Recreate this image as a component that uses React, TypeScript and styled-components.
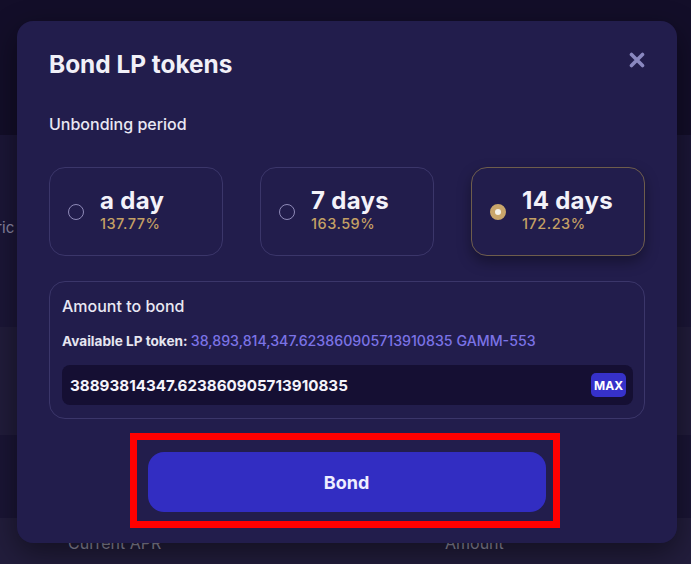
import styled, { createGlobalStyle } from 'styled-components';

const GlobalStyle = createGlobalStyle`
  html, body {
    margin: 0;
    padding: 0;
    background: #130e29;
  }
  body {
    font-family: Inter, "Noto Sans", "Liberation Sans", sans-serif;
    color: #ecebf5;
  }
  * { box-sizing: border-box; }
`;

type Period = { label: string; apr: string; selected?: boolean };

const periods: Period[] = [
  { label: 'a day', apr: '137.77%' },
  { label: '7 days', apr: '163.59%' },
  { label: '14 days', apr: '172.23%', selected: true },
];

const CloseIcon = () => (
  <svg width="16" height="16" viewBox="0 0 16 16" fill="none">
    <path d="M2.5 2.5L13.5 13.5M13.5 2.5L2.5 13.5" stroke="#8a88c0" strokeWidth="3.6" strokeLinecap="round" />
  </svg>
);

const App = () => {
  return (
    <>
      <GlobalStyle />
      <Screen>
        <Page>
          <TopBar />
          <Row $tone="#1b1637" $height={192}>
            <RowLabel>Metric</RowLabel>
          </Row>
          <Row $tone="#211c3b" $height={108} />
          <Row $tone="#1a1535" $height={83} />
          <TableHead>
            <HeadCell $width={377}>Current APR</HeadCell>
            <HeadCell>Amount</HeadCell>
          </TableHead>
        </Page>

        <Modal>
          <TitleRow>
            <Title>Bond LP tokens</Title>
            <CloseButton aria-label="close">
              <CloseIcon />
            </CloseButton>
          </TitleRow>

          <SectionLabel>Unbonding period</SectionLabel>

          <Options>
            {periods.map((p) => (
              <Option key={p.label} $selected={p.selected}>
                <Radio $selected={p.selected} />
                <OptionText>
                  <OptionLabel>{p.label}</OptionLabel>
                  <OptionApr>{p.apr}</OptionApr>
                </OptionText>
              </Option>
            ))}
          </Options>

          <AmountBox>
            <AmountTitle>Amount to bond</AmountTitle>
            <Available>
              Available LP token: <AvailableValue>38,893,814,347.623860905713910835 GAMM-553</AvailableValue>
            </Available>
            <InputRow>
              <AmountValue>38893814347.623860905713910835</AmountValue>
              <MaxButton>MAX</MaxButton>
            </InputRow>
          </AmountBox>

          <Footer>
            <Highlight>
              <BondButton>Bond</BondButton>
            </Highlight>
          </Footer>
        </Modal>
      </Screen>
    </>
  );
};

const Screen = styled.div`
  position: relative;
  width: 691px;
  height: 564px;
  overflow: hidden;
`;

const Page = styled.div`
  display: flex;
  flex-direction: column;
  height: 100%;
`;

const TopBar = styled.div`
  height: 135px;
  background: #130e29;
`;

const Row = styled.div<{ $tone: string; $height: number }>`
  height: ${(p) => p.$height}px;
  background: ${(p) => p.$tone};
  display: flex;
  align-items: center;
  padding-bottom: 8px;
`;

const RowLabel = styled.span`
  margin-left: -31px;
  font-size: 15px;
  color: #8a87a3;
`;

const TableHead = styled.div`
  flex: 1;
  background: #221d3c;
  display: flex;
  padding: 15px 0 0 68px;
`;

const HeadCell = styled.span<{ $width?: number }>`
  width: ${(p) => (p.$width ? `${p.$width}px` : 'auto')};
  font-size: 16px;
  line-height: 20px;
  color: #8e8ca0;
`;

const Modal = styled.div`
  position: absolute;
  top: 21px;
  left: 17px;
  width: 660px;
  height: 522px;
  background: #221d4c;
  border-radius: 16px;
  padding: 28px 32px 15px;
  display: flex;
  flex-direction: column;
  box-shadow: 0 10px 30px rgba(0, 0, 0, 0.45);
`;

const TitleRow = styled.div`
  display: flex;
  justify-content: space-between;
  align-items: center;
  height: 29px;
`;

const Title = styled.h2`
  margin: 0;
  font-size: 24.4px;
  line-height: 30px;
  font-weight: 700;
  color: #f1f0f8;
`;

const CloseButton = styled.button`
  display: flex;
  background: none;
  border: none;
  padding: 0;
  margin: -8px 0 0 0;
  cursor: pointer;
`;

const SectionLabel = styled.div`
  margin-top: 36px;
  font-size: 16px;
  line-height: 20px;
  font-weight: 500;
  color: #e9e8f3;
`;

const Options = styled.div`
  margin-top: 33px;
  display: grid;
  grid-template-columns: repeat(3, 174px);
  justify-content: space-between;
`;

const Option = styled.div<{ $selected?: boolean }>`
  height: 89px;
  border-radius: 16px;
  border: 1px solid ${(p) => (p.$selected ? '#6e5d4c' : '#3b366a')};
  box-shadow: ${(p) => (p.$selected ? '0 6px 14px rgba(0, 0, 0, 0.35)' : 'none')};
  display: flex;
  align-items: center;
  gap: 16px;
  padding: 0 0 4px 18px;
`;

const Radio = styled.span<{ $selected?: boolean }>`
  width: 16px;
  height: 16px;
  border-radius: 50%;
  flex: none;
  margin-top: 4px;
  box-sizing: border-box;
  border: ${(p) => (p.$selected ? '5px solid #c9a66b' : '1.5px solid #8f8ab8')};
  background: ${(p) => (p.$selected ? '#f5f2ea' : 'transparent')};
`;

const OptionText = styled.div`
  display: flex;
  flex-direction: column;
`;

const OptionLabel = styled.span`
  font-size: 24px;
  line-height: 28px;
  font-weight: 700;
  letter-spacing: 0.3px;
  color: #f3f2f9;
`;

const OptionApr = styled.span`
  font-size: 14.5px;
  line-height: 18px;
  font-weight: 500;
  letter-spacing: 0.5px;
  color: #c4a064;
`;

const AmountBox = styled.div`
  margin-top: 25px;
  border: 1px solid #3b366a;
  border-radius: 16px;
  padding: 14px 11px 13px 12px;
  display: flex;
  flex-direction: column;
`;

const AmountTitle = styled.div`
  font-size: 16px;
  line-height: 20px;
  font-weight: 500;
  color: #e9e8f3;
`;

const Available = styled.div`
  margin-top: 17px;
  font-size: 13.6px;
  line-height: 16px;
  font-weight: 700;
  color: #e6e5f0;
`;

const AvailableValue = styled.span`
  font-size: 14.2px;
  font-weight: 500;
  color: #7b73e6;
`;

const InputRow = styled.div`
  margin-top: 16px;
  height: 40px;
  border-radius: 8px;
  background: #150f33;
  display: flex;
  align-items: center;
  justify-content: space-between;
  padding: 0 7px 0 8px;
`;

const AmountValue = styled.span`
  font-size: 15.2px;
  font-weight: 700;
  color: #f5f4fb;
`;

const MaxButton = styled.button`
  width: 35px;
  height: 24px;
  border: none;
  border-radius: 5px;
  background: #3631c9;
  color: #ffffff;
  font-family: inherit;
  font-size: 12px;
  font-weight: 700;
  padding: 0;
`;

const Footer = styled.div`
  margin-top: auto;
  display: flex;
  justify-content: center;
  padding-right: 5px;
`;

const Highlight = styled.div`
  border: 7px solid #ff0000;
  padding: 12px 7px 9px 11px;
`;

const BondButton = styled.button`
  display: block;
  width: 398px;
  height: 60px;
  border: none;
  border-radius: 16px;
  background: #322dc2;
  color: #eeeeff;
  font-family: inherit;
  font-size: 18px;
  font-weight: 700;
  cursor: pointer;
`;

export default App;
